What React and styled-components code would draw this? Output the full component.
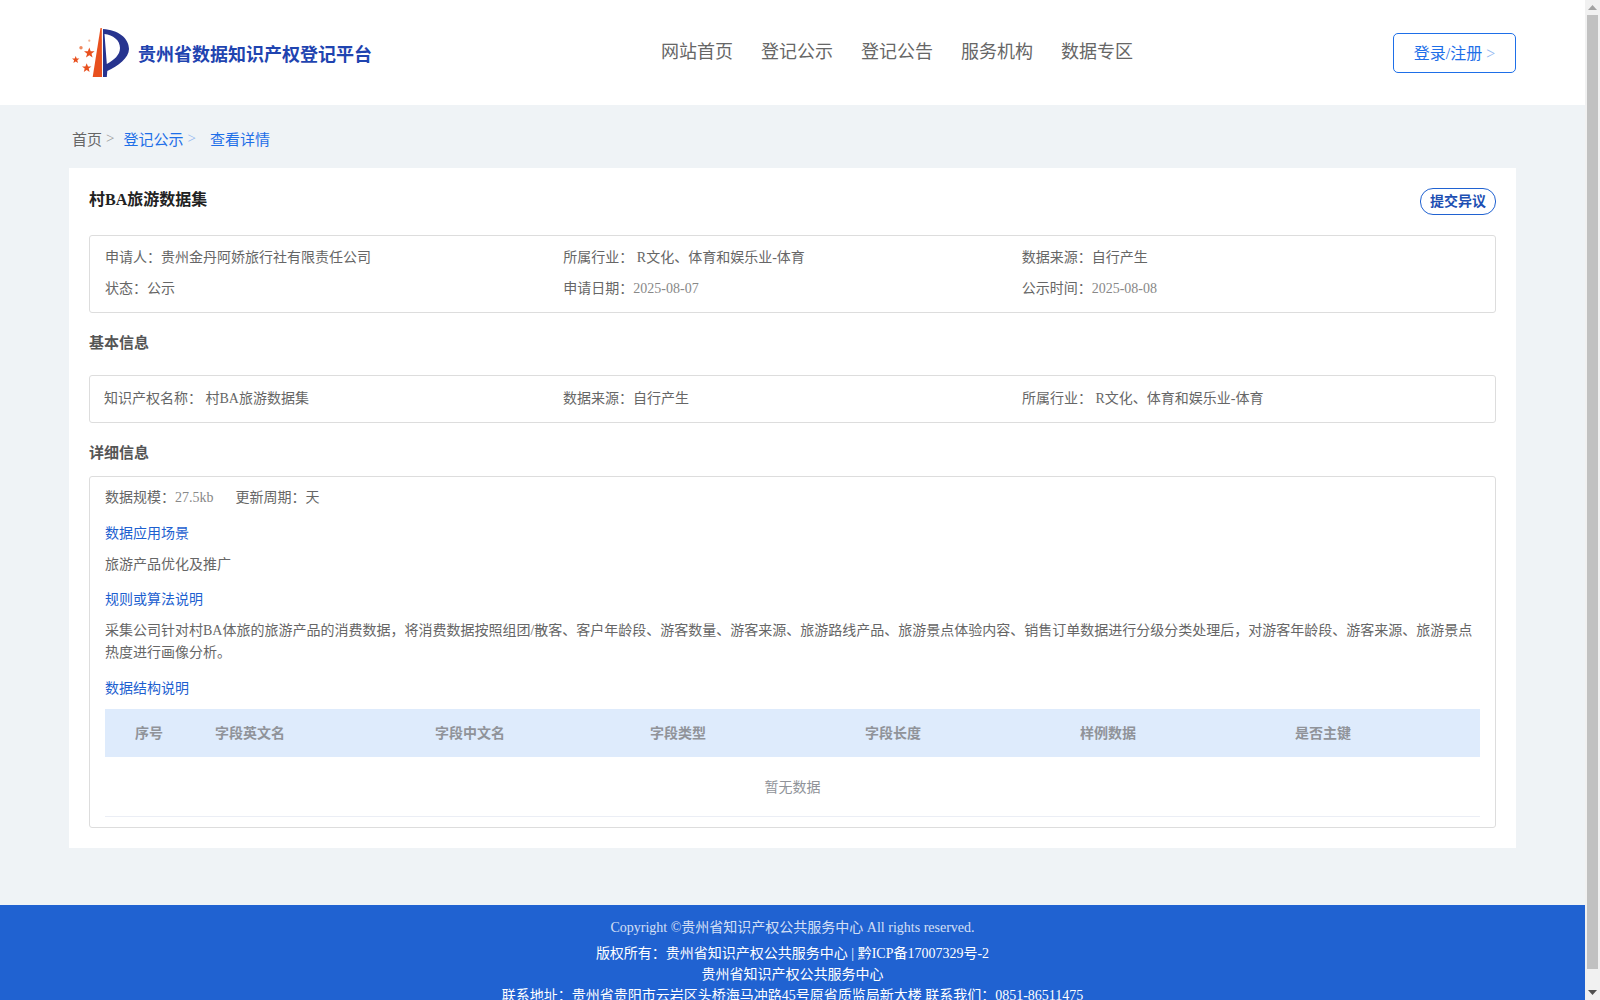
import React from "react";
import styled, { createGlobalStyle } from "styled-components";

const Global = createGlobalStyle`
  html, body { margin: 0; padding: 0; height: 100%; overflow: hidden; }
  body { font-family: "Liberation Serif", "Noto Sans CJK SC", serif; background: #eff3f6; }
  * { box-sizing: border-box; }
`;

const Viewport = styled.div`
  display: flex;
  height: 1000px;
  overflow: hidden;
`;

const Page = styled.div`
  flex: 1;
  min-width: 0;
`;

const Header = styled.header`
  height: 105px;
  background: #fff;
  display: flex;
  align-items: center;
  padding: 0 69px 0 70px;
`;

const Brand = styled.div`
  width: 591px;
  display: flex;
  align-items: center;
  gap: 8px;
`;

const BrandName = styled.span`
  font-size: 18px;
  font-weight: 700;
  color: #1f44b0;
  white-space: nowrap;
`;

const Nav = styled.nav`
  flex: 1;
  display: flex;
  gap: 28px;
  padding-bottom: 5px;
`;

const NavItem = styled.a`
  font-size: 18px;
  color: #666;
`;

const LoginButton = styled.button`
  width: 123px;
  height: 40px;
  background: #fff;
  border: 1px solid #1e6fe8;
  border-radius: 5px;
  color: #1e6fe8;
  font: inherit;
  font-size: 16px;
  padding: 0 0 2px;
`;

const Arrow = styled.span`
  color: #8fb6f1;
`;

const Crumbs = styled.div`
  height: 63px;
  display: flex;
  align-items: center;
  padding: 4px 0 0 72px;
  font-size: 15px;
  color: #666;
`;

const CrumbLink = styled.a`
  color: #1e6fe8;
  margin-left: ${(p) => p.$gap}px;
`;

const CrumbArrow = styled.span`
  color: ${(p) => p.$color};
  margin-left: 4px;
`;

const Card = styled.main`
  margin: 0 69px;
  height: 680px;
  background: #fff;
  padding: 20px 20px;
`;

const TitleRow = styled.div`
  display: flex;
  justify-content: space-between;
  align-items: flex-start;
  height: 47px;
`;

const Title = styled.h1`
  margin: 1px 0 0;
  font-size: 16px;
  line-height: 22px;
  color: #222;
`;

const ObjectionButton = styled.button`
  width: 76px;
  height: 27px;
  background: #fff;
  border: 1px solid #2062d1;
  border-radius: 13px;
  color: #1d4fb3;
  font: inherit;
  font-size: 14px;
  font-weight: 700;
  padding: 0 0 3px;
`;

const Box = styled.section`
  border: 1px solid #ddd;
  border-radius: 3px;
  padding: ${(p) => p.$padding};
  color: #666;
  font-size: 14px;
`;

const InfoGrid = styled.div`
  display: grid;
  grid-template-columns: repeat(3, 1fr);
  row-gap: 9px;
  line-height: 22px;
`;

const SectionTitle = styled.h2`
  margin: ${(p) => p.$margin};
  font-size: 15px;
  line-height: 22px;
  color: #555;
`;

const Facts = styled.div`
  display: flex;
  gap: 22px;
  line-height: 20px;
`;

const Muted = styled.span`
  color: #888;
`;

const Label = styled.div`
  color: #1d5fd0;
  line-height: 20px;
  margin: ${(p) => p.$margin};
`;

const Paragraph = styled.p`
  margin: ${(p) => p.$margin};
  line-height: 22px;
`;

const Table = styled.div`
  display: grid;
  grid-template-columns: 80px 220px repeat(5, 215px) 1fr;
`;

const HeadCell = styled.div`
  height: 48px;
  background: #deebfc;
  color: #909399;
  font-weight: 700;
  display: flex;
  align-items: center;
  padding: 0 0 2px 30px;
`;

const Empty = styled.div`
  height: 60px;
  border-bottom: 1px solid #ebeef5;
  color: #909399;
  display: flex;
  align-items: center;
  justify-content: center;
  padding-bottom: 2px;
`;

const Footer = styled.footer`
  margin-top: 57px;
  background: #2062d1;
  color: #fff;
  text-align: center;
  font-size: 14px;
  padding-top: 12px;
  height: 200px;
`;

const FooterLine = styled.div`
  line-height: 21px;
  opacity: ${(p) => p.$opacity || 1};
  margin-bottom: ${(p) => p.$after || 0}px;
`;

const Scrollbar = styled.div`
  width: 15px;
  background: #f1f1f1;
  display: flex;
  flex-direction: column;
  align-items: center;
`;

const ScrollArrow = styled.div`
  height: ${(p) => p.$height}px;
  width: 15px;
  display: flex;
  align-items: ${(p) => p.$align};
  justify-content: center;
  padding: 5px 0;
`;

const ScrollThumb = styled.div`
  width: 11px;
  height: 954px;
  background: #c1c1c1;
`;

const Logo = () => (
  <svg width="60" height="56" viewBox="0 0 60 56">
    <path d="M30.500 3 L31.800 3 L32 52 L22.700 52 Z" fill="#e8501e" />
    <path d="M33 4 C48 5 59 13 59 24 C59 33 48 41 37.300 46 L36.800 52 L33 52 Z M34.500 9 L36.800 39 C44 35 50 30 50 23 C50 15 43 10 34.500 9 Z" fill="#27348f" fillRule="evenodd" />
    <polygon points="19.300,22.500 20.700,26.200 24.600,26.300 21.500,28.700 22.600,32.500 19.300,30.300 16,32.500 17.100,28.700 14,26.300 17.900,26.200" fill="#e8501e" />
    <polygon points="5.700,31 6.700,33.500 9.400,33.600 7.300,35.300 8,37.900 5.700,36.400 3.400,37.900 4.100,35.300 2,33.600 4.700,33.500" fill="#e8501e" />
    <polygon points="16.700,38.200 18,41.400 21.400,41.500 18.700,43.600 19.600,46.900 16.700,45 13.800,46.900 14.700,43.600 12,41.500 15.400,41.400" fill="#e8501e" />
    <circle cx="11" cy="22.700" r="1.700" fill="#ee8a60" />
    <circle cx="19.300" cy="15.700" r="1.100" fill="#f0b090" />
  </svg>
);

const navItems = ["网站首页", "登记公示", "登记公告", "服务机构", "数据专区"];
const columns = ["序号", "字段英文名", "字段中文名", "字段类型", "字段长度", "样例数据", "是否主键"];

export default function App() {
  return (
    <>
      <Global />
      <Viewport>
        <Page>
          <Header>
            <Brand>
              <Logo />
              <BrandName>贵州省数据知识产权登记平台</BrandName>
            </Brand>
            <Nav>
              {navItems.map((n) => (
                <NavItem key={n}>{n}</NavItem>
              ))}
            </Nav>
            <LoginButton>
              登录/注册 <Arrow>&gt;</Arrow>
            </LoginButton>
          </Header>
          <Crumbs>
            首页<CrumbArrow $color="#999">&gt;</CrumbArrow>
            <CrumbLink $gap={9}>登记公示</CrumbLink>
            <CrumbArrow $color="#8fb6f1">&gt;</CrumbArrow>
            <CrumbLink $gap={14}>查看详情</CrumbLink>
          </Crumbs>
          <Card>
            <TitleRow>
              <Title>村BA旅游数据集</Title>
              <ObjectionButton>提交异议</ObjectionButton>
            </TitleRow>
            <Box $padding="11px 15px 12px">
              <InfoGrid>
                <div>申请人：贵州金丹阿娇旅行社有限责任公司</div>
                <div>所属行业： R文化、体育和娱乐业-体育</div>
                <div>数据来源：自行产生</div>
                <div>状态：公示</div>
                <div>申请日期：<Muted>2025-08-07</Muted></div>
                <div>公示时间：<Muted>2025-08-08</Muted></div>
              </InfoGrid>
            </Box>
            <SectionTitle $margin="19px 0 21px">基本信息</SectionTitle>
            <Box $padding="12px 14px">
              <InfoGrid>
                <div>知识产权名称： 村BA旅游数据集</div>
                <div>数据来源：自行产生</div>
                <div>所属行业： R文化、体育和娱乐业-体育</div>
              </InfoGrid>
            </Box>
            <SectionTitle $margin="19px 0 12px">详细信息</SectionTitle>
            <Box $padding="11px 15px 10px">
              <Facts>
                <span>数据规模：<Muted>27.5kb</Muted></span>
                <span>更新周期：天</span>
              </Facts>
              <Label $margin="16px 0 0">数据应用场景</Label>
              <Paragraph $margin="10px 0 0">旅游产品优化及推广</Paragraph>
              <Label $margin="14px 0 0">规则或算法说明</Label>
              <Paragraph $margin="10px 0 0">
                采集公司针对村BA体旅的旅游产品的消费数据，将消费数据按照组团/散客、客户年龄段、游客数量、游客来源、旅游路线产品、旅游景点体验内容、销售订单数据进行分级分类处理后，对游客年龄段、游客来源、旅游景点热度进行画像分析。
              </Paragraph>
              <Label $margin="15px 0 10px">数据结构说明</Label>
              <Table>
                {columns.map((c, i) => (
                  <HeadCell key={i}>{c}</HeadCell>
                ))}
              </Table>
              <Empty>暂无数据</Empty>
            </Box>
          </Card>
          <Footer>
            <FooterLine $opacity={0.8} $after={5}>Copyright ©贵州省知识产权公共服务中心 All rights reserved.</FooterLine>
            <FooterLine>版权所有：贵州省知识产权公共服务中心 | 黔ICP备17007329号-2</FooterLine>
            <FooterLine>贵州省知识产权公共服务中心</FooterLine>
            <FooterLine>联系地址：贵州省贵阳市云岩区头桥海马冲路45号原省质监局新大楼 联系我们：0851-86511475</FooterLine>
          </Footer>
        </Page>
        <Scrollbar>
          <ScrollArrow $height={15} $align="center">
            <svg width="9" height="5" viewBox="0 0 9 5"><path d="M4.500 0 L9 5 L0 5 Z" fill="#a3a3a3" /></svg>
          </ScrollArrow>
          <ScrollThumb />
          <ScrollArrow $height={31} $align="flex-end">
            <svg width="9" height="5" viewBox="0 0 9 5"><path d="M4.500 5 L9 0 L0 0 Z" fill="#505050" /></svg>
          </ScrollArrow>
        </Scrollbar>
      </Viewport>
    </>
  );
}
